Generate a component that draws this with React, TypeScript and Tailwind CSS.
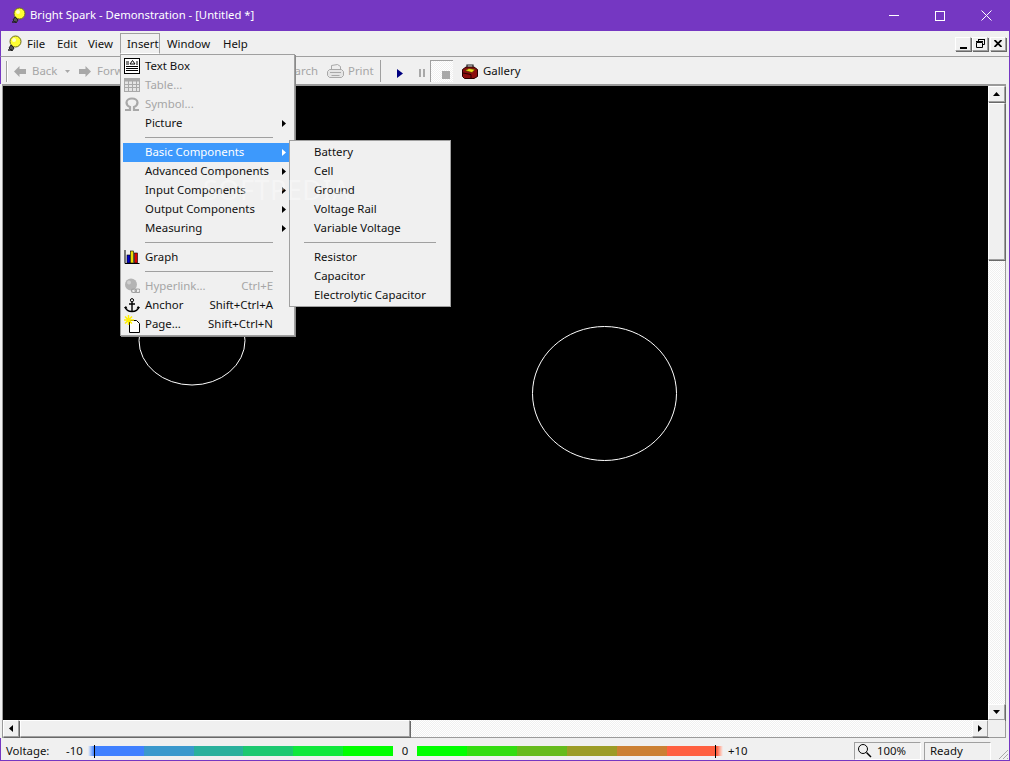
import React from "react";

const font = "font-['Noto_Sans','Open_Sans',sans-serif]";
const dither = "bg-[repeating-conic-gradient(#ffffff_0_25%,#f0f0f0_0_50%)] bg-[length:2px_2px]";

function Bulb() {
  return (
    <svg width="16" height="18" viewBox="0 0 16 18" className="shrink-0">
      <circle cx="9.500" cy="6.500" r="5.500" fill="#ffff33" stroke="#6b6b20" strokeWidth="1" />
      <circle cx="8" cy="5" r="2" fill="#ffffcc" />
      <path d="M5 10l3 3-2 3-3-3z" fill="#555" stroke="#222" strokeWidth="1" />
      <path d="M2 15h4" stroke="#222" strokeWidth="1.500" />
    </svg>
  );
}

function TextBoxIcon() {
  return (
    <svg width="16" height="16" viewBox="0 0 16 16">
      <rect x="0.500" y="0.500" width="15" height="15" fill="#fff" stroke="#000" />
      <path d="M6 6l2.500-3.500L11 6z" fill="#fff" stroke="#000" />
      <path d="M2 4h3M2 6h3M12 4h2M12 6h2" stroke="#000" />
      <path d="M2 8.500h12M2 10.500h12M2 12.500h12" stroke="#000" />
    </svg>
  );
}

function TableIcon() {
  return (
    <svg width="16" height="14" viewBox="0 0 16 14">
      <rect x="0.500" y="0.500" width="15" height="13" fill="#e4e4e4" stroke="#a8a8a8" />
      <rect x="0.500" y="0.500" width="15" height="3" fill="#a8a8a8" />
      <path d="M0 6.500h16M0 9.500h16M4.500 3v11M8.500 3v11M12.500 3v11" stroke="#a8a8a8" />
    </svg>
  );
}

function OmegaIcon() {
  return (
    <svg width="16" height="14" viewBox="0 0 16 14">
      <path d="M1 13h5v-3C3.500 9 2.500 7 2.500 5.500 2.500 3 5 1.500 8 1.500S13.500 3 13.500 5.500C13.500 7 12.500 9 10 10v3h5" fill="none" stroke="#a8a8a8" strokeWidth="2.200" />
    </svg>
  );
}

function GraphIcon() {
  return (
    <svg width="16" height="16" viewBox="0 0 16 16">
      <path d="M1 1v13.500h14.500" fill="none" stroke="#000" strokeWidth="1" />
      <rect x="3" y="6" width="3" height="8" fill="#0000cc" stroke="#000" strokeWidth="0.600" />
      <rect x="6.500" y="2" width="3" height="12" fill="#eedd00" stroke="#000" strokeWidth="0.600" />
      <rect x="10.500" y="4" width="3" height="10" fill="#dd0000" stroke="#000" strokeWidth="0.600" />
    </svg>
  );
}

function HyperlinkIcon() {
  return (
    <svg width="16" height="16" viewBox="0 0 16 16">
      <circle cx="7" cy="6.500" r="6" fill="#b4b4b4" />
      <circle cx="5" cy="4.500" r="2" fill="#d0d0d0" />
      <rect x="7.500" y="11" width="5" height="3.500" rx="1.700" fill="none" stroke="#a0a0a0" strokeWidth="1.200" />
      <rect x="11" y="11" width="5" height="3.500" rx="1.700" fill="none" stroke="#a0a0a0" strokeWidth="1.200" />
    </svg>
  );
}

function AnchorIcon() {
  return (
    <svg width="16" height="15" viewBox="0 0 16 15">
      <circle cx="8" cy="2.200" r="1.600" fill="none" stroke="#000" />
      <path d="M8 4v9M5 6h6" stroke="#000" strokeWidth="1.400" />
      <path d="M1 9c1 3 4 4.500 7 4.500S14 12 15 9" fill="none" stroke="#000" strokeWidth="1.400" />
      <path d="M0 10l2-2 1.500 2.500zM16 10l-2-2-1.500 2.500z" fill="#000" />
    </svg>
  );
}

function PageIcon() {
  return (
    <svg width="17" height="18" viewBox="0 0 17 18">
      <path d="M5.500 5.500h7l3 3v9h-10z" fill="#fff" stroke="#000" />
      <path d="M4.500 0v10M0 5h10M1 1.500l7 7M8 1.500l-7 7" stroke="#ffee00" strokeWidth="1.500" />
    </svg>
  );
}

function GalleryIcon() {
  return (
    <svg width="16" height="15" viewBox="0 0 16 15">
      <path d="M0.500 5.500L4 3h8l3.500 2.500v7L12 14.500H2.500l-2-2z" fill="#8c0e0e" stroke="#2a0000" />
      <path d="M5 3V1h6v2" fill="none" stroke="#222" strokeWidth="1.200" />
      <path d="M3 6.500l4-2 6 1-3 3z" fill="#eedd22" stroke="#443300" strokeWidth="0.600" />
      <path d="M1 9l8 1.500v4" fill="none" stroke="#2a0000" />
    </svg>
  );
}

function PrintIcon() {
  return (
    <svg width="17" height="15" viewBox="0 0 17 15">
      <path d="M4.500 5.500v-4l6-1 3 2v3" fill="#eee" stroke="#a8a8a8" />
      <path d="M2.500 5.500h12l2 2v4l-2 2h-12l-2-2v-4z" fill="#e4e4e4" stroke="#a8a8a8" />
      <path d="M3 8.500h11M4.500 11.500h8" stroke="#a8a8a8" />
    </svg>
  );
}

function ArrowLeft() {
  return (
    <svg width="12" height="11" viewBox="0 0 12 11">
      <path d="M0 5.500L5.500 0v3H12v5H5.500v3z" fill="#a8a8a8" />
    </svg>
  );
}

function ArrowRight() {
  return (
    <svg width="12" height="11" viewBox="0 0 12 11">
      <path d="M12 5.500L6.500 0v3H0v5h6.500v3z" fill="#a8a8a8" />
    </svg>
  );
}

function Caret({ fill = "#000" }: { fill?: string }) {
  return (
    <svg width="4" height="7" viewBox="0 0 4 7" className="absolute right-[3px] top-[6px]">
      <path d="M0 0l4 3.500L0 7z" fill={fill} />
    </svg>
  );
}

type Item = {
  label: string;
  icon?: React.ReactNode;
  shortcut?: string;
  disabled?: boolean;
  sub?: boolean;
  active?: boolean;
};

function Row({ item }: { item: Item }) {
  const color = item.active ? "text-white bg-[#3d99fc]" : item.disabled ? "text-[#a6a6a6]" : "text-[#101010]";
  return (
    <div className={`relative flex items-center h-[19px] pl-[22px] pr-[15px] whitespace-nowrap ${color}`}>
      {item.icon && (
        <span className="absolute left-0 top-0 w-[18px] h-[19px] flex items-center justify-center">
          {item.icon}
        </span>
      )}
      <span>{item.label}</span>
      {item.shortcut && <span className="ml-auto mr-[1px]">{item.shortcut}</span>}
      {item.sub && <Caret fill={item.active ? "#fff" : "#000"} />}
    </div>
  );
}

function Sep({ inset = 22, right = 16 }: { inset?: number; right?: number }) {
  return (
    <div className="h-[10px] flex items-center" style={{ paddingLeft: inset, paddingRight: right }}>
      <div className="h-px w-full bg-[#a0a0a0]" />
    </div>
  );
}

function InsertMenu() {
  return (
    <div className="absolute left-[120px] top-[54px] w-[175px] h-[282px] z-20 bg-[#f0f0f0] border border-[#a0a0a0] pl-[2px] pr-[5px] pt-[1.5px] shadow-[1px_1px_0_#8a8a8a]">
      <Row item={{ label: "Text Box", icon: <TextBoxIcon /> }} />
      <Row item={{ label: "Table...", icon: <TableIcon />, disabled: true }} />
      <Row item={{ label: "Symbol...", icon: <OmegaIcon />, disabled: true }} />
      <Row item={{ label: "Picture", sub: true }} />
      <Sep />
      <Row item={{ label: "Basic Components", sub: true, active: true }} />
      <Row item={{ label: "Advanced Components", sub: true }} />
      <Row item={{ label: "Input Components", sub: true }} />
      <Row item={{ label: "Output Components", sub: true }} />
      <Row item={{ label: "Measuring", sub: true }} />
      <Sep />
      <Row item={{ label: "Graph", icon: <GraphIcon /> }} />
      <Sep />
      <Row item={{ label: "Hyperlink...", icon: <HyperlinkIcon />, shortcut: "Ctrl+E", disabled: true }} />
      <Row item={{ label: "Anchor", icon: <AnchorIcon />, shortcut: "Shift+Ctrl+A" }} />
      <Row item={{ label: "Page...", icon: <PageIcon />, shortcut: "Shift+Ctrl+N" }} />
    </div>
  );
}

function SubMenu() {
  const rows = (labels: string[]) =>
    labels.map((l) => (
      <div key={l} className="flex items-center h-[19px] pl-[24px] whitespace-nowrap text-[#101010]">
        {l}
      </div>
    ));
  return (
    <div className="absolute left-[289px] top-[140px] w-[162px] h-[167px] z-30 bg-[#f0f0f0] border border-[#a0a0a0] pt-[1.5px]">
      {rows(["Battery", "Cell", "Ground", "Voltage Rail", "Variable Voltage"])}
      <Sep inset={14} right={14} />
      {rows(["Resistor", "Capacitor", "Electrolytic Capacitor"])}
    </div>
  );
}

function MiniBtn({ children, className = "" }: { children: React.ReactNode; className?: string }) {
  return (
    <div className={`flex items-center justify-center bg-[#f0f0f0] border-t border-l border-white border-r border-b border-r-[#a0a0a0] border-b-[#a0a0a0] shadow-[1px_1px_0_#696969] ${className}`}>
      {children}
    </div>
  );
}

function TriV({ down = false }: { down?: boolean }) {
  return (
    <svg width="7" height="4" viewBox="0 0 7 4">
      <path d={down ? "M0 0h7L3.500 4z" : "M0 4h7L3.500 0z"} fill="#000" />
    </svg>
  );
}

function TriH({ right = false }: { right?: boolean }) {
  return (
    <svg width="4" height="7" viewBox="0 0 4 7">
      <path d={right ? "M0 0v7l4-3.500z" : "M4 0v7L0 3.500z"} fill="#000" />
    </svg>
  );
}

const leftBar = ["#4080ff", "#3a98cc", "#2ab09c", "#1cc870", "#10e83c", "#00ff00"];
const rightBar = ["#00ff00", "#33dd11", "#66bb1c", "#9c9c26", "#cc8033", "#ff6040"];

export default function App() {
  return (
    <div className={`relative w-[1010px] h-[761px] overflow-hidden bg-[#f0f0f0] flex flex-col text-[11.4px] border-r border-b border-[#7537c2] ${font}`}>
      {/* Title bar */}
      <div className="h-[31px] shrink-0 bg-[#7537c2] flex items-center text-white pl-[10px]">
        <Bulb />
        <span className="ml-[4px] text-[11.3px]">Bright Spark - Demonstration - [Untitled *]</span>
        <div className="ml-auto flex items-center h-full">
          <div className="w-[46px] flex justify-center">
            <div className="w-[10px] h-px bg-white" />
          </div>
          <div className="w-[46px] flex justify-center">
            <div className="w-[10px] h-[10px] border border-white" />
          </div>
          <div className="w-[46px] flex justify-center">
            <svg width="11" height="11" viewBox="0 0 11 11">
              <path d="M0.500 0.500l10 10M10.500 0.500l-10 10" stroke="#fff" />
            </svg>
          </div>
        </div>
      </div>

      {/* Menu bar */}
      <div className="h-[26px] shrink-0 flex items-center border-l border-[#7537c2] border-b border-b-[#a0a0a0] text-[#101010]">
        <div className="w-[26px] pl-[5px] flex items-center"><Bulb /></div>
        <span className="w-[30px]">File</span>
        <span className="w-[31px]">Edit</span>
        <span className="w-[32px]">View</span>
        <div className="w-[40px] h-[21px] flex items-center pl-[6px] border-t border-l border-r border-[#a0a0a0] border-b border-b-white">Insert</div>
        <span className="w-[56px] ml-[7px]">Window</span>
        <span>Help</span>
        <div className="ml-auto flex items-center gap-[1px] pr-[3px]">
          <MiniBtn className="w-[16px] h-[14px] items-end pb-[1px]">
            <div className="w-[7px] h-[2px] bg-black" />
          </MiniBtn>
          <MiniBtn className="w-[16px] h-[14px]">
            <svg width="9" height="9" viewBox="0 0 9 9">
              <path d="M2.500 2V0.500h6v5H6.500" fill="none" stroke="#000" />
              <path d="M0.500 3.500h6v5h-6z M0 2.500h7 M2 0.500h7" fill="none" stroke="#000" />
            </svg>
          </MiniBtn>
          <MiniBtn className="w-[16px] h-[14px] ml-[1px]">
            <svg width="8" height="7" viewBox="0 0 8 7">
              <path d="M0.500 0l7 7M7.500 0l-7 7" stroke="#000" strokeWidth="1.800" />
            </svg>
          </MiniBtn>
        </div>
      </div>

      {/* Toolbar */}
      <div className="h-[27px] pt-[1px] shrink-0 flex items-center border-l border-[#7537c2] text-[#a6a6a6]">
        <div className="ml-[5px] w-[2px] h-[21px] border-l border-[#a0a0a0] bg-white" />
        <div className="ml-[6px]"><ArrowLeft /></div>
        <span className="ml-[6px] w-[33px]">Back</span>
        <svg width="5" height="3" viewBox="0 0 5 3"><path d="M0 0h5L2.500 3z" fill="#a8a8a8" /></svg>
        <div className="ml-[9px]"><ArrowRight /></div>
        <span className="ml-[6px] w-[54px]">Forward</span>
        <span className="ml-[102px] w-[65px] text-right">Search</span>
        <div className="ml-[9px]"><PrintIcon /></div>
        <span className="ml-[4px] w-[32px]">Print</span>
        <div className="w-px h-[22px] bg-[#a0a0a0]" />
        <svg width="6" height="9" viewBox="0 0 6 9" className="ml-[16px] mt-[4px]"><path d="M0 0l6 4.500L0 9z" fill="#000080" /></svg>
        <div className="ml-[16px] mt-[4px] flex gap-[2px]">
          <div className="w-[2px] h-[8px] bg-[#a8a8a8]" />
          <div className="w-[2px] h-[8px] bg-[#a8a8a8]" />
        </div>
        <div className={`ml-[5px] w-[23px] h-[22px] flex items-end justify-center pb-[3px] pl-[7px] border-t border-l border-[#a0a0a0] ${dither}`}>
          <div className="w-[8px] h-[8px] bg-[#a8a8a8]" />
        </div>
        <div className="ml-[9px]"><GalleryIcon /></div>
        <span className="ml-[5px] text-[#101010]">Gallery</span>
      </div>

      {/* Client area */}
      <div className="h-[654px] shrink-0 ml-[2px] mr-[3px] border-t-2 border-l border-[#9a9a9a] border-r border-b flex flex-col">
        <div className="flex-1 flex min-h-0">
          <div className="relative flex-1 bg-black overflow-hidden">
            <svg className="absolute left-0 top-0" width="990" height="640">
              <ellipse cx="189" cy="254.500" rx="53" ry="44.500" fill="none" stroke="#fff" />
              <ellipse cx="601.500" cy="307.500" rx="72" ry="67" fill="none" stroke="#fff" />
            </svg>
          </div>
          <div className={`w-[17px] flex flex-col ${dither}`}>
            <MiniBtn className="h-[16px] shrink-0"><TriV /></MiniBtn>
            <MiniBtn className="h-[157px] mt-[1px] shrink-0"><span /></MiniBtn>
            <div className="flex-1" />
            <MiniBtn className="h-[16px] shrink-0"><TriV down /></MiniBtn>
          </div>
        </div>
        <div className={`h-[17px] shrink-0 flex ${dither}`}>
          <MiniBtn className="w-[16px] shrink-0"><TriH /></MiniBtn>
          <MiniBtn className="w-[390px] ml-px shrink-0"><span /></MiniBtn>
          <div className="flex-1" />
          <MiniBtn className="w-[16px] shrink-0"><TriH right /></MiniBtn>
          <div className="w-[17px] shrink-0 bg-[#f0f0f0]" />
        </div>
      </div>

      {/* Status bar */}
      <div className="flex-1 flex items-center pt-[3px] border-l border-[#7537c2] text-[#101010]">
        <span className="ml-[5px] w-[60px]">Voltage:</span>
        <span className="w-[22px]">-10</span>
        <div className="relative w-[305px] h-[10px] flex shrink-0">
          <div className="w-[6px] bg-gradient-to-r from-[#f0f0f0] to-[#4080ff]" />
          {leftBar.map((c) => (
            <div key={c} className="flex-1" style={{ backgroundColor: c }} />
          ))}
          <div className="absolute left-[6px] top-[-1px] w-px h-[13px] bg-black" />
        </div>
        <span className="w-[24px] text-center">0</span>
        <div className="relative w-[306px] h-[10px] flex shrink-0">
          {rightBar.map((c) => (
            <div key={c} className="flex-1" style={{ backgroundColor: c }} />
          ))}
          <div className="w-[6px] bg-gradient-to-r from-[#ff6040] to-[#f0f0f0]" />
          <div className="absolute right-[7px] top-[-1px] w-px h-[13px] bg-black" />
        </div>
        <span className="ml-[5px] w-[126px]">+10</span>
        <div className="w-[67px] h-[18px] flex items-center border-t border-l border-[#a0a0a0] border-r border-r-white border-b border-b-white">
          <svg width="15" height="15" viewBox="0 0 15 15" className="ml-[2px]">
            <circle cx="6" cy="6" r="4.500" fill="none" stroke="#000" />
            <path d="M9.500 9.500l4.500 4.500" stroke="#000" strokeWidth="1.500" />
          </svg>
          <span className="ml-[5px]">100%</span>
        </div>
        <div className="ml-[3px] w-[67px] h-[18px] flex items-center pl-[5px] border-t border-l border-[#a0a0a0] border-r border-r-white">Ready</div>
        <svg width="12" height="12" viewBox="0 0 12 12" className="ml-auto self-end">
          <path d="M11 2L2 11M11 6l-5 5M11 10l-1 1" stroke="#a8a8a8" />
        </svg>
      </div>

      <InsertMenu />
      <SubMenu />
      <div className="absolute left-[203px] top-[175px] z-40 text-[27px] leading-[30px] tracking-[0.5px] text-white/40 pointer-events-none">
        SOFTPEDIA
      </div>
    </div>
  );
}
